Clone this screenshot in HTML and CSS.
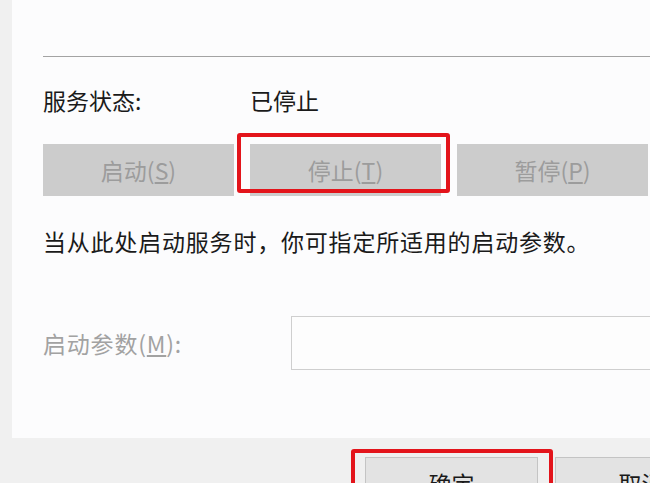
FILE: index.html
```html
<!DOCTYPE html>
<html lang="zh-CN">
<head>
<meta charset="utf-8">
<title>服务属性</title>
<link rel="stylesheet" href="styles.css">
</head>
<body>
<div class="screen">
  <div class="panel">
    <div class="sep"></div>
    <div class="status-row">
      <span class="status-label">服务状态:</span>
      <span class="status-value">已停止</span>
    </div>
    <div class="btn-row">
      <div class="btn">启动(<u>S</u>)</div>
      <div class="btn">停止(<u>T</u>)<span class="mark mark-stop"></span></div>
      <div class="btn">暂停(<u>P</u>)</div>
    </div>
    <p class="desc">当从此处启动服务时，你可指定所适用的启动参数。</p>
    <div class="param-row">
      <span class="param-label">启动参数(<u>M</u>):</span>
      <div class="param-input"></div>
    </div>
  </div>
  <div class="footer">
    <div class="dlg-btn">确定<span class="mark mark-ok"></span></div>
    <div class="dlg-btn">取消</div>
  </div>
</div>
</body>
</html>
```

FILE: styles.css
```css
html, body {
  margin: 0;
  padding: 0;
}
body {
  width: 650px;
  height: 483px;
  overflow: hidden;
  background: #f0f0f0;
  font-family: "Noto Sans CJK SC", "Noto Sans", sans-serif;
  font-size: 23px;
  color: #1a1a1a;
}
.screen {
  width: 650px;
  height: 483px;
  overflow: hidden;
}
.panel {
  box-sizing: border-box;
  width: 760px;
  height: 438px;
  margin-left: 12px;
  padding: 56px 0 0 31px;
  background: #fcfcfd;
}
.sep {
  height: 1px;
  background: #a3a3a3;
}
.status-row {
  display: flex;
  margin-top: 32px;
  line-height: 23px;
  height: 23px;
}
.status-label {
  width: 207px;
}
.btn-row {
  display: flex;
  gap: 16px;
  margin-top: 32px;
}
.btn {
  position: relative;
  width: 191px;
  height: 52px;
  background: #cccccc;
  color: #9c9c9c;
  display: flex;
  align-items: center;
  justify-content: center;
  line-height: 1;
}
.btn u, .param-label u {
  text-underline-offset: 2px;
}
.desc {
  margin: 34px 0 0;
  line-height: 23px;
  height: 23px;
  letter-spacing: 0.8px;
}
.param-row {
  display: flex;
  align-items: center;
  margin-top: 63px;
}
.param-label {
  width: 248px;
  color: #a2a2a2;
  line-height: 23px;
  letter-spacing: 0.8px;
}
.param-input {
  box-sizing: border-box;
  width: 420px;
  height: 54px;
  border: 1px solid #cfcfcf;
  background: #fdfdfd;
}
.footer {
  display: flex;
  gap: 17px;
  padding: 19px 0 0 365px;
}
.dlg-btn {
  position: relative;
  box-sizing: border-box;
  flex: none;
  width: 173px;
  height: 52px;
  background: #e3e3e3;
  border: 1px solid #c4c4c4;
  display: flex;
  align-items: center;
  justify-content: center;
  color: #1a1a1a;
  line-height: 1;
}
.mark {
  position: absolute;
  box-sizing: border-box;
  border: 4px solid #e3141b;
  border-radius: 3px;
}
.mark-stop {
  left: -13px;
  top: -11px;
  width: 213px;
  height: 60px;
}
.mark-ok {
  left: -15px;
  top: -9px;
  width: 202px;
  height: 70px;
}
```
